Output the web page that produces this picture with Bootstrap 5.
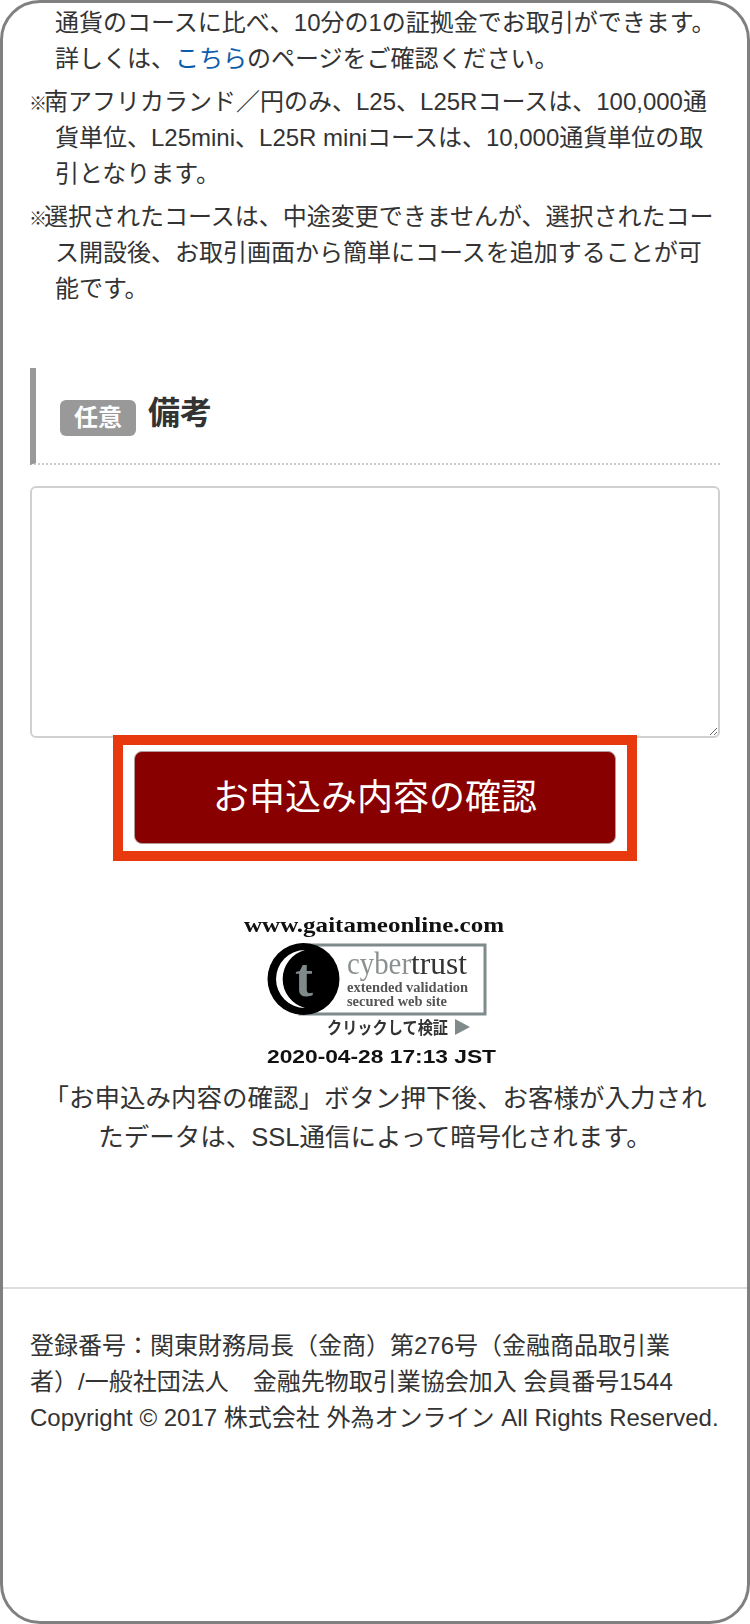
<!DOCTYPE html>
<html lang="ja">
<head>
<meta charset="utf-8">
<title>お申込み内容の確認</title>
<link rel="stylesheet" href="https://cdn.jsdelivr.net/npm/bootstrap@5.3.0/dist/css/bootstrap.min.css">
<style>
html,body{height:100%;background:#fff;overflow:hidden}
body{font-family:"Liberation Sans","Noto Sans CJK JP",sans-serif;font-size:24px;line-height:36px;color:#333}
.frame-shell{height:1624px;border:3px solid #808080;border-radius:40px;overflow:hidden;background:#fff;padding:2px 27px 0}
.note-lines{margin:0;padding:0;list-style:none}
.note-lines li{padding-left:25px;margin-bottom:7px}
.note-lines li.marked{text-indent:-11px}
.ref-mark{font-size:18px;font-weight:700;display:inline-block;width:14px;text-indent:0;margin-left:-15px;margin-right:1px;line-height:1}
.note-lines a{color:#0b5cad;text-decoration:none}
.memo-head{margin-top:61px;height:97px;border-left:6px solid #999;border-bottom:2px dotted #ccc;padding-left:24px;gap:12px}
.memo-badge{width:76px;height:36px;margin-top:5px;background:#999;color:#fff;font-weight:700;border-radius:6px;line-height:36px;text-align:center}
.memo-title{font-size:32px;font-weight:700;margin:-5px 0 0;line-height:36px;color:#333}
.memo-input.form-control{height:252px;margin-top:21px;border:2px solid #d0d0d0;border-radius:6px;box-shadow:none}
.confirm-outline{width:524px;height:126px;margin:-3px auto 0;border:10px solid #e8380d;background:#fff;padding:6px 11px;position:relative}
.confirm-btn.btn{width:482px;height:93px;background:#800;color:#fff;font-size:36px;line-height:1;border:1px solid #b59a9a;border-radius:8px;padding:0}
.seal-wrap{margin-top:51px}
.seal-wrap svg{display:block;margin:0 auto;filter:blur(.4px)}
.ssl-note{margin:9px 0 0;font-size:25.5px;line-height:39px}
.rule-full{margin:130px -27px 0;border:0;border-top:2px solid #ddd;opacity:1}
.legal-text{margin:39px 0 0;white-space:nowrap}
</style>
</head>
<body>
<div class="frame-shell">
  <ul class="note-lines">
    <li>通貨のコースに比べ、10分の1の証拠金でお取引ができます。<br>詳しくは、<a href="#">こちら</a>のページをご確認ください。</li>
    <li class="marked"><span class="ref-mark">※</span>南アフリカランド／円のみ、L25、L25Rコースは、100,000通貨単位、L25mini、L25R miniコースは、10,000通貨単位の取引となります。</li>
    <li class="marked"><span class="ref-mark">※</span>選択されたコースは、中途変更できませんが、選択されたコース開設後、お取引画面から簡単にコースを追加することが可能です。</li>
  </ul>
  <div class="memo-head d-flex align-items-center">
    <span class="memo-badge">任意</span>
    <h2 class="memo-title">備考</h2>
  </div>
  <textarea class="form-control memo-input"></textarea>
  <div class="confirm-outline">
    <button type="button" class="btn confirm-btn">お申込み内容の確認</button>
  </div>
  <div class="seal-wrap">
    <svg width="270" height="158" viewBox="0 0 270 158" role="img" aria-label="cybertrust seal">
      <text x="4" y="20" font-family="Liberation Serif" font-weight="700" font-size="22" fill="#111" textLength="260" lengthAdjust="spacingAndGlyphs">www.gaitameonline.com</text>
      <rect x="60" y="33" width="185" height="69" fill="#fff" stroke="#7f8a8a" stroke-width="3"/>
      <circle cx="63.5" cy="67" r="36" fill="#000"/>
      <path d="M65 38 A29 29 0 0 0 65 96 A30 30 0 0 1 65 38Z" fill="#fff"/>
      <text x="64" y="84" text-anchor="middle" font-family="Liberation Serif" font-weight="700" font-size="54" fill="#7f8a8a">t</text>
      <text x="107" y="62" font-family="Liberation Serif" font-size="31" fill="#8a9090" textLength="64" lengthAdjust="spacingAndGlyphs">cyber</text>
      <text x="171" y="62" font-family="Liberation Serif" font-size="31" fill="#333" textLength="56" lengthAdjust="spacingAndGlyphs">trust</text>
      <text x="107" y="80" font-family="Liberation Serif" font-weight="700" font-size="14" fill="#555" textLength="121" lengthAdjust="spacingAndGlyphs">extended validation</text>
      <text x="107" y="94" font-family="Liberation Serif" font-weight="700" font-size="14" fill="#555" textLength="100" lengthAdjust="spacingAndGlyphs">secured web site</text>
      <text x="87" y="122" font-family="Noto Sans CJK JP" font-weight="700" font-size="17" fill="#333" textLength="121" lengthAdjust="spacingAndGlyphs">クリックして検証</text>
      <path d="M215 107 L230 115 L215 123Z" fill="#7f8a8a"/>
      <text x="27" y="151" font-family="Liberation Sans" font-weight="700" font-size="19" fill="#111" textLength="229" lengthAdjust="spacingAndGlyphs">2020-04-28 17:13 JST</text>
    </svg>
  </div>
  <p class="ssl-note text-center px-2">「お申込み内容の確認」ボタン押下後、お客様が入力されたデータは、SSL通信によって暗号化されます。</p>
  <hr class="rule-full">
  <p class="legal-text">登録番号：関東財務局長（金商）第276号（金融商品取引業<br>者）/一般社団法人　金融先物取引業協会加入 会員番号1544<br>Copyright © 2017 株式会社 外為オンライン All Rights Reserved.</p>
</div>
<script src="https://cdn.jsdelivr.net/npm/bootstrap@5.3.0/dist/js/bootstrap.bundle.min.js"></script>
</body>
</html>
